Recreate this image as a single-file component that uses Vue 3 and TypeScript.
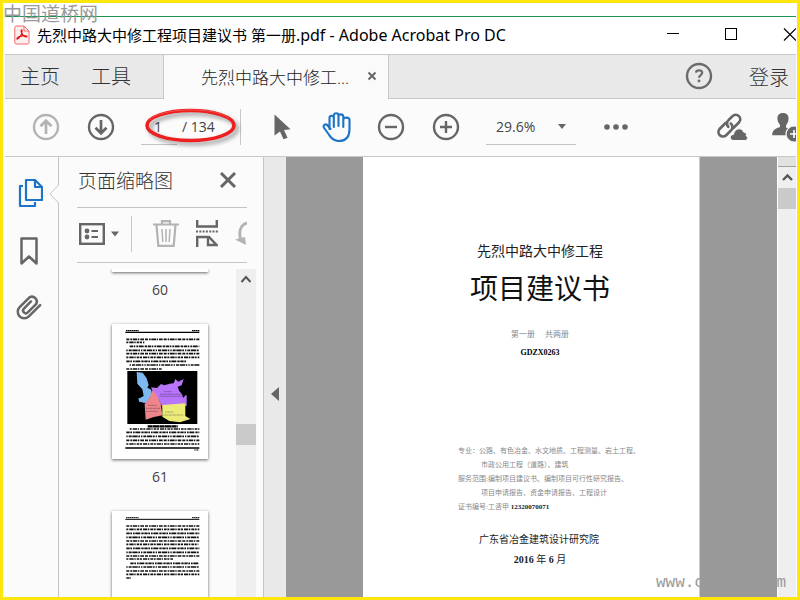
<script setup lang="ts">
import { ref } from 'vue'

interface Row {
  x: number
  y: number
  w: number
  dash: string
}

const pageNumber = ref('1')
const zoom = ref('29.6%')

const patterns = [
  '9 3 5 2 14 2 4 3 11 3',
  '6 3 13 2 4 3 8 2',
  '10 2 5 3 5 2 15 3 7 2',
  '4 3 9 2 16 2 5 3',
]

function makeRows(list: [number, number, number][]): Row[] {
  return list.map(([x, y, w], i) => ({ x, y, w, dash: patterns[i % patterns.length] }))
}

const mapPageRows = makeRows([
  [43, 46, 219], [43, 55, 54], [53, 67, 209], [43, 79, 219], [43, 89, 219],
  [43, 100, 219], [43, 112, 182], [53, 123, 209], [43, 135, 106],
  [53, 315, 209], [43, 325, 219], [43, 337, 219], [43, 349, 219], [43, 360, 219],
])

const textPageRows = makeRows([
  [43, 45, 219], [43, 55, 219], [43, 67, 219], [43, 79, 219], [43, 90, 219],
  [43, 100, 216], [43, 112, 219], [43, 124, 219], [43, 135, 219], [43, 144, 140],
  [55, 157, 207], [43, 168, 219], [43, 180, 219], [43, 190, 219], [43, 201, 14],
])
</script>

<template>
  <div class="frame">
    <div class="top-strip"></div>
    <header class="titlebar">
      <svg class="pdf-icon" width="16" height="20" viewBox="0 0 16 20">
        <path d="M2 1h8l5 5v11.500a1.500 1.500 0 0 1-1.500 1.500h-11.500a1.500 1.500 0 0 1-1.200-1.500v-15A1.500 1.500 0 0 1 2 1z" fill="#fdeeee" stroke="#ef6a6a" />
        <path d="M10 1v5h5" fill="none" stroke="#ef6a6a" />
        <path d="M3 13.500c0-1.500 6-3.500 9.500-2.500 1.500 1-1 1.500-2.500 0C8 9.500 6.500 6 7.300 5c1.200-.8 1 2.500-.3 5-1.200 2.500-4 5.500-4 3.500z" fill="none" stroke="#e01818" stroke-width="1.200" />
      </svg>
      <h1>先烈中路大中修工程项目建议书 第一册<span>.pdf - Adobe Acrobat Pro DC</span></h1>
      <div class="window-buttons">
        <button aria-label="最小化"><svg width="13" height="13"><path d="M0 5.500h12" stroke="#000" /></svg></button>
        <button aria-label="最大化"><svg width="13" height="13"><rect x=".5" y=".5" width="11" height="11" fill="none" stroke="#000" /></svg></button>
        <button aria-label="关闭"><svg width="13" height="13"><path d="M1 .5l12 12M13 .5l-12 12" stroke="#000" stroke-width="1.200" /></svg></button>
      </div>
    </header>

    <nav class="tabs">
      <button class="tab home">主页</button>
      <button class="tab tools">工具</button>
      <div class="tab-active">
        <button class="doc-name">先烈中路大中修工...</button>
        <button class="tab-close" aria-label="关闭标签">
          <svg width="10" height="10"><path d="M1.500 1.500l7 7M8.500 1.500l-7 7" stroke="#666" stroke-width="2" /></svg>
        </button>
      </div>
      <button class="help" aria-label="帮助">
        <svg width="28" height="28" viewBox="0 0 28 28" fill="none" stroke="#6b6b6b">
          <circle cx="14" cy="14" r="12" stroke-width="2.400" />
          <path d="M11 10.600c.3-3 6.200-3 6.200.2 0 2.200-3.200 2.300-3.200 5" stroke-width="2.200" />
          <circle cx="14" cy="19" r="1.400" fill="#6b6b6b" stroke="none" />
        </svg>
      </button>
      <button class="tab login">登录</button>
    </nav>

    <div class="toolbar">
      <button class="round" aria-label="上一页">
        <svg width="28" height="28" viewBox="0 0 28 28" fill="none" stroke="#b3b3b3" stroke-width="2.400">
          <circle cx="14" cy="14" r="12" /><path d="M14 21V8M8.500 13.200L14 7.700l5.500 5.500" stroke-width="2.700" />
        </svg>
      </button>
      <button class="round" aria-label="下一页">
        <svg width="28" height="28" viewBox="0 0 28 28" fill="none" stroke="#666" stroke-width="2.400">
          <circle cx="14" cy="14" r="12" /><path d="M14 7v13M8.500 14.800l5.500 5.500 5.500-5.500" stroke-width="2.700" />
        </svg>
      </button>
      <div class="pager">
        <input v-model="pageNumber" aria-label="页码" />
        <span>/ 134</span>
        <svg class="marker" width="104" height="44" viewBox="0 0 104 44">
          <ellipse cx="50.500" cy="20.500" rx="43.500" ry="15" fill="none" stroke="#ee1f1f" stroke-width="3.600" />
          <path d="M9 15C20 3 74 1 89 13" fill="none" stroke="#f36b6b" stroke-width=".6" />
        </svg>
      </div>
      <div class="divider"></div>
      <button class="arrow" aria-label="选择">
        <svg width="18" height="28" viewBox="0 0 18 28"><path d="M1.500 1.500L17.500 16.300l-6.500.8 3.500 7.700-4 1.500L7 18.500l-5.500 4z" fill="#666" /></svg>
      </button>
      <button class="hand" aria-label="手形工具">
        <svg width="30" height="30" viewBox="0 0 30 30" fill="none" stroke="#1c73c8" stroke-width="2.100" stroke-linecap="round" stroke-linejoin="round">
          <path d="M7.500 17V5.800c0-2.800 4.300-2.800 4.300 0V15M11.800 14V3.400c0-2.900 4.700-2.900 4.700 0V14M16.500 4.500c0-3 4.800-2.700 4.800.3V15M21.300 8c0-3.300 6.200-3 6.200 0v9c0 8-4 12-10.500 12-5.500 0-8-2.500-10.500-7L1.800 15.500c-1-3 2-4 3.700-2.200L8.500 17" />
        </svg>
      </button>
      <button class="round minus" aria-label="缩小">
        <svg width="28" height="28" viewBox="0 0 28 28" fill="none" stroke="#666" stroke-width="2.400"><circle cx="14" cy="14" r="12" /><path d="M8 14h12" /></svg>
      </button>
      <button class="round plus" aria-label="放大">
        <svg width="28" height="28" viewBox="0 0 28 28" fill="none" stroke="#666" stroke-width="2.400"><circle cx="14" cy="14" r="12" /><path d="M8 14h12M14 8v12" /></svg>
      </button>
      <div class="zoom">
        <select v-model="zoom" aria-label="缩放比例"><option>29.6%</option></select>
        <svg width="8" height="5"><path d="M0 0h8l-4 5z" fill="#666" /></svg>
      </div>
      <button class="more" aria-label="更多">
        <svg width="24" height="6" fill="#666"><circle cx="3" cy="3" r="2.800" /><circle cx="12" cy="3" r="2.800" /><circle cx="21" cy="3" r="2.800" /></svg>
      </button>
      <div class="right-tools">
        <button aria-label="共享链接">
          <svg width="32" height="30" viewBox="0 0 32 30" fill="none" stroke="#666" stroke-width="2.700" stroke-linecap="round">
            <g transform="translate(13 14) rotate(-45)">
              <path d="M0-4.500H-8.500a4.500 4.500 0 0 0 0 9H-1a4.500 4.500 0 0 0 4-5" />
              <path d="M2 4.500H9.500a4.500 4.500 0 0 0 0-9H4a4.500 4.500 0 0 0-5 4.500" />
            </g>
            <path d="M17.500 28.500c-4.500 0-4.500-6 0-6 1-6.500 8.500-7.500 10-2.500 2.800.2 3.300 2.500 2.500 3.500 2.500 1.200 1.500 5-.5 5z" fill="#666" stroke="#fbfbfb" stroke-width="1" />
          </svg>
        </button>
        <button aria-label="邀请他人">
          <svg width="25" height="30" viewBox="0 0 25 30">
            <path d="M12 1c4 0 6 2.500 5.500 6.500-.3 3-1.500 4.500-2.500 6v2c3 1.500 8 2 9 6v1.800H1.200c0-6 4-6.800 7.800-8.300v-2c-1-1.500-2.200-3-2.500-5.500C6 3.500 8 1 12 1z" fill="#666" />
            <circle cx="23" cy="22" r="8" fill="#666" stroke="#fafafa" stroke-width="1.200" />
            <path d="M19 22h8M23 18v8" stroke="#fff" stroke-width="1.600" />
          </svg>
        </button>
      </div>
    </div>

    <main class="workspace">
      <aside class="rail">
        <svg class="notch" width="10" height="20"><path d="M10 .5L1 10l9 9.500" fill="#fbfbfb" stroke="#c4c4c4" /></svg>
        <button aria-label="页面缩略图">
          <svg width="26" height="30" viewBox="0 0 26 30" fill="none" stroke="#1c73c8" stroke-width="2.200" stroke-linejoin="round">
            <path d="M6 8H3v20h15v-4" /><path d="M9 2h9l7 7v13H9z" /><path d="M18 2v7h7" />
          </svg>
        </button>
        <button aria-label="书签">
          <svg width="20" height="30" viewBox="0 0 20 30"><path d="M1.500 2.500h15v25l-7.500-7-7.500 7z" fill="none" stroke="#666" stroke-width="2.500" stroke-linejoin="round" /></svg>
        </button>
        <button aria-label="附件">
          <svg width="28" height="28" viewBox="0 0 28 28" fill="none" stroke="#666" stroke-width="2.500" stroke-linecap="round">
            <g transform="translate(12.500 13.500) rotate(-45)">
              <path d="M10 6.500H-6A6.500 6.500 0 0 1-6-6.500H8a5 5 0 0 1 0 9.500H-4a2.500 2.500 0 0 1 0-5.500H6" />
            </g>
          </svg>
        </button>
      </aside>

      <section class="panel">
        <div class="panel-head">
          <h2>页面缩略图</h2>
          <button aria-label="关闭面板"><svg width="18" height="18"><path d="M2 2l14 14M16 2L2 16" stroke="#666" stroke-width="3" /></svg></button>
        </div>
        <div class="panel-tools">
          <button class="options" aria-label="选项">
            <svg width="41" height="22" viewBox="0 0 41 22">
              <rect x="1.200" y="1.200" width="23.600" height="19.600" fill="none" stroke="#666" stroke-width="2.400" />
              <circle cx="8" cy="8" r="2.400" fill="#666" /><circle cx="8" cy="14" r="2.400" fill="#666" />
              <path d="M12.500 8H19M12.500 14H19" stroke="#666" stroke-width="2" /><path d="M32 8.500h8l-4 5z" fill="#666" />
            </svg>
          </button>
          <div class="divider small"></div>
          <button class="trash" aria-label="删除">
            <svg width="26" height="28" viewBox="0 0 26 28" fill="none" stroke="#b3b3b3" stroke-width="2.200">
              <path d="M0 4.500h26M9 4V1.200h8V4M3.500 5l1.800 20.800h15.400L22.500 5" /><path d="M9 9l.8 13M13 9v13M17 9l-.8 13" stroke-width="1.500" />
            </svg>
          </button>
          <button class="split" aria-label="拆分页面">
            <svg width="22" height="28" viewBox="0 0 22 28" fill="none" stroke="#666" stroke-width="2.400">
              <path d="M1.200 0v6.500h19.600V0" /><path d="M0 11.500h22" stroke-dasharray="2 1.300" stroke-width="2" />
              <path d="M1.200 27V17H13l7.500 8H12v-8" />
            </svg>
          </button>
          <button class="rotate" aria-label="旋转">
            <svg width="12" height="26" viewBox="0 0 12 26"><path d="M12 2C6 4 3.500 10 5.500 18" fill="none" stroke="#b3b3b3" stroke-width="3" /><path d="M0 18.500l10-2.500 1 8z" fill="#b3b3b3" /></svg>
          </button>
        </div>
        <div class="thumb-area">
          <div class="thumb-list">
            <div class="sheet tail"></div>
            <span class="num">60</span>
            <div class="sheet">
              <svg viewBox="0 0 288 405" width="96" height="135">
                <path d="M42 20h38M240 20h22" stroke="#000" stroke-width="4" stroke-dasharray="5 1" />
                <path d="M40 25h222" stroke="#000" stroke-width="4" />
                <path v-for="r in mapPageRows" :key="r.y" :d="`M${r.x} ${r.y}h${r.w}`" stroke="#111" stroke-width="5" :stroke-dasharray="r.dash" />
                <rect x="46" y="141" width="210" height="159" fill="#000" />
                <path d="M74 144l18 2 12 17 6 20-4 8 12 6-1 18-14 22-22-4-1-9 15-8-4-20-15-17z" fill="#7db8f0" />
                <path d="M117 190l18 2 12-12 10 4 16-5 12-1 5-13 9 8 16-8-6 19-12 4 5 14 8 8 4 12 6-8 4 0v32h-30l-42 5-10-21-17-23z" fill="#b874fa" />
                <path d="M80 222l20 4-2 12-18-12z" fill="#7db8f0" />
                <path d="M120 198l14 16 12 24 5 36-28 6-22 7-3-46 16-22z" fill="#ee858d" />
                <path d="M151 243l69-5v38l15 9-31 10-32-4-21-13z" fill="#ecea78" />
                <path d="M156 203h24M144 211h70M142 217h72M108 244h26M102 253h42M102 262h36M160 264h24M154 273h60" stroke="#222" stroke-opacity=".6" stroke-width="2" stroke-dasharray="3 1" />
                <path d="M107 307h90" stroke="#000" stroke-width="7" stroke-dasharray="14 1 20 1" />
                <path d="M40 372h222" stroke="#000" stroke-width="5" />
                <path d="M247 378h13" stroke="#000" stroke-width="3" stroke-dasharray="3 1" />
              </svg>
            </div>
            <span class="num">61</span>
            <div class="sheet">
              <svg viewBox="0 0 288 405" width="96" height="135">
                <path d="M42 20h38M240 20h22" stroke="#000" stroke-width="3" stroke-dasharray="5 1" />
                <path d="M40 25h222" stroke="#000" stroke-width="3" />
                <path v-for="r in textPageRows" :key="r.y" :d="`M${r.x} ${r.y}h${r.w}`" stroke="#111" stroke-width="5" :stroke-dasharray="r.dash" />
              </svg>
            </div>
          </div>
          <div class="scroll">
            <svg class="up" width="20" height="20"><path d="M5.500 13l4.500-5 4.500 5" fill="none" stroke="#555" stroke-width="2" /></svg>
            <div class="grip low"></div>
          </div>
        </div>
      </section>

      <button class="splitter" aria-label="折叠面板">
        <svg width="8" height="14"><path d="M8 0v14L0 7z" fill="#666" /></svg>
      </button>

      <section class="viewer">
        <article class="page">
          <p class="project">先烈中路大中修工程</p>
          <p class="headline">项目建议书</p>
          <p class="volume"><span>第一册</span><span>共两册</span></p>
          <p class="code">GDZX0263</p>
          <div class="details">
            <p>专业：公路、有色冶金、水文地质、工程测量、岩土工程、</p>
            <p class="indent">市政公用工程（道路）、建筑</p>
            <p>服务范围:编制项目建议书、编制项目可行性研究报告、</p>
            <p class="indent">项目申请报告、资金申请报告、工程设计</p>
            <p>证书编号:工咨甲 <b>12320070071</b></p>
          </div>
          <p class="institute">广东省冶金建筑设计研究院</p>
          <p class="date"><b>2016</b> 年 <b>6</b> 月</p>
        </article>
      </section>
      <div class="scroll main-scroll">
        <div class="split-box"></div>
        <svg class="up" width="18" height="21"><path d="M5 13l4.500-4.500L14 13" fill="none" stroke="#555" stroke-width="2.400" /></svg>
        <div class="grip"></div>
      </div>
    </main>

    <div class="mark-top">中国道桥网</div>
    <div class="mark-bottom"><span>www.c</span><span>m</span></div>
  </div>
</template>

<style>
body {
  margin: 0;
}
</style>

<style scoped>
* {
  box-sizing: border-box;
}
.frame {
  position: relative;
  display: flex;
  flex-direction: column;
  height: 100vh;
  overflow: hidden;
  border: 3px solid #fde60b;
  padding: 0 1px 0 2px;
  background: #fff;
  color: #444;
  font-family: "Open Sans", "Noto Sans CJK SC", sans-serif;
}
h1, h2, p {
  margin: 0;
  font-weight: 400;
}
button {
  display: flex;
  align-items: center;
  justify-content: center;
  flex: none;
  padding: 0;
  border: 0;
  background: none;
  color: inherit;
  font: inherit;
}
svg {
  display: block;
  flex: none;
}
.top-strip {
  flex: none;
  height: 14px;
  border-bottom: 1px solid #1d9350;
}
.titlebar {
  display: flex;
  flex: none;
  align-items: center;
  height: 38px;
  padding: 0 0 2px 9px;
  border-bottom: 1px solid #c8c8c8;
}
h1 {
  margin-left: 7px;
  color: #000;
  font-family: "Noto Sans", "Noto Sans CJK SC", sans-serif;
  font-size: 15px;
  line-height: 24px;
  white-space: nowrap;
}
h1 span {
  font-size: 16px;
}
.window-buttons {
  display: flex;
  gap: 45px;
  margin-left: auto;
}
.tabs {
  display: flex;
  flex: none;
  height: 44px;
  border-bottom: 1px solid #c8c8c8;
  background: #e9e9e9;
}
.tab {
  padding-bottom: 2px;
  color: #333;
  font-family: "Noto Sans CJK SC", sans-serif;
  font-size: 20px;
  font-weight: 300;
}
.home {
  margin-left: 15px;
}
.tools {
  margin: 0 32px 0 31px;
}
.tab-active {
  display: flex;
  height: 44px;
  width: 226px;
  padding: 0 0 2px 37px;
  border: 1px solid #c8c8c8;
  border-width: 0 1px;
  background: #fafafa;
}
.doc-name {
  color: #222;
  font-family: "Open Sans", "Noto Sans CJK SC", sans-serif;
  font-size: 17px;
  font-weight: 300;
}
.tab-close {
  margin: 0 11px 0 auto;
}
.help {
  margin-left: auto;
  padding-bottom: 2px;
}
.login {
  margin: 0 7px 0 36px;
  padding-bottom: 0;
}
.toolbar {
  display: flex;
  flex: none;
  align-items: center;
  height: 58px;
  padding-bottom: 2px;
  border-bottom: 1px solid #c8c8c8;
  background: #fbfbfb;
  font-size: 15px;
}
.round {
  margin-left: 27px;
}
.pager {
  position: relative;
  display: flex;
  align-items: center;
  height: 36px;
  margin-left: 26px;
  font-size: 14px;
}
.pager input {
  width: 36px;
  height: 36px;
  padding: 0 0 0 13px;
  border: 0;
  border-bottom: 1px solid #c4c4c4;
  background: none;
  color: inherit;
  font: inherit;
}
.pager span {
  width: 59px;
  padding-left: 5px;
}
.marker {
  position: absolute;
  left: -1px;
  top: -4px;
  pointer-events: none;
  filter: drop-shadow(3px 3px 2px #0006);
}
.divider {
  width: 1px;
  height: 36px;
  margin-left: 4px;
  background: #c8c8c8;
}
.arrow {
  margin-left: 32px;
}
.hand {
  margin-left: 31px;
}
.minus {
  margin-left: 25px;
}
.zoom {
  position: relative;
  display: flex;
  align-items: center;
  width: 90px;
  height: 36px;
  margin-left: 26px;
  border-bottom: 1px solid #c4c4c4;
}
.zoom select {
  width: 100%;
  height: 35px;
  padding: 0 0 0 10px;
  border: 0;
  appearance: none;
  background: none;
  color: inherit;
  font: inherit;
  font-size: 14px;
}
.zoom svg {
  position: absolute;
  right: 10px;
  pointer-events: none;
}
.more {
  margin-left: 28px;
}
.right-tools {
  display: flex;
  gap: 23px;
  margin-left: auto;
}
.workspace {
  display: flex;
  flex: 1;
  min-height: 0;
}
.rail {
  position: relative;
  display: flex;
  flex-direction: column;
  align-items: center;
  gap: 28px;
  width: 54px;
  padding: 21px 4px 0 0;
  border-right: 1px solid #c4c4c4;
  background: #fbfbfb;
}
.notch {
  position: absolute;
  right: -1px;
  top: 27px;
}
.panel {
  display: flex;
  flex-direction: column;
  width: 205px;
  padding-left: 18px;
  border-right: 1px solid #c4c4c4;
  background: #fbfbfb;
}
.panel-head {
  display: flex;
  flex: none;
  align-items: center;
  justify-content: space-between;
  height: 51px;
  margin-right: 16px;
  padding: 0 10px 4px 1px;
  border-bottom: 1px solid #c4c4c4;
}
h2 {
  color: #333;
  font-family: "Noto Sans CJK SC", sans-serif;
  font-size: 19px;
  font-weight: 300;
  line-height: 28px;
}
.panel-tools {
  display: flex;
  flex: none;
  align-items: center;
  height: 55px;
  margin-right: 16px;
  padding: 0 0 2px 2px;
  border-bottom: 1px solid #c4c4c4;
}
.panel-tools .small {
  margin-left: 11px;
}
.trash {
  margin-left: 21px;
}
.split {
  margin-left: 17px;
}
.rotate {
  margin-left: auto;
}
.thumb-area {
  display: flex;
  flex: 1;
  min-height: 0;
  margin: 6px 7px 0 0;
}
.thumb-list {
  display: flex;
  flex: 1;
  flex-direction: column;
  align-items: center;
  overflow: hidden;
  padding-left: 7px;
}
.sheet {
  flex: none;
  width: 96px;
  height: 135px;
  background: #fff;
  box-shadow: 0 1px 3px #0009;
}
.tail {
  height: 3px;
}
.num {
  flex: none;
  height: 52px;
  font-size: 14px;
  line-height: 36px;
}
.scroll {
  flex: none;
  width: 20px;
  background: #efefef;
}
.grip {
  height: 21px;
  background: #cacaca;
}
.low {
  margin-top: 135px;
}
.splitter {
  width: 22px;
  padding-top: 34px;
  background: #e9e9e9;
}
.viewer {
  display: flex;
  flex: 1;
  background: #999;
}
.page {
  flex: 1;
  margin: 0 77px;
  padding: 83px 0 0;
  border-right: 1px solid #ccc;
  background: #fff;
  color: #222;
  font-family: "Liberation Serif", "Noto Sans CJK SC", serif;
  text-align: center;
  white-space: nowrap;
}
.project {
  padding-left: 18px;
  font-size: 14px;
  line-height: 24px;
}
.headline {
  margin-top: 6px;
  padding-left: 18px;
  color: #111;
  font-size: 28px;
  line-height: 40px;
}
.volume {
  display: flex;
  justify-content: center;
  gap: 10px;
  margin-top: 16px;
  padding-left: 18px;
  color: #888;
  font-size: 8px;
  line-height: 18px;
}
.code {
  padding-left: 18px;
  color: #000;
  font-size: 8px;
  font-weight: 700;
  line-height: 18px;
}
.details {
  margin-top: 82px;
  padding-left: 95px;
  color: #888;
  font-size: 7px;
  line-height: 14px;
  text-align: left;
}
.indent {
  padding-left: 23px;
}
.details b {
  color: #222;
}
.institute {
  margin-top: 16px;
  padding-left: 16px;
  font-size: 10px;
  line-height: 20px;
}
.date {
  padding-left: 18px;
  font-size: 10px;
  line-height: 20px;
}
.main-scroll {
  width: 19px;
  border-left: 1px solid #fff;
}
.split-box {
  height: 10px;
  border-bottom: 1px solid #a0a0a0;
  background: #e1e1df;
}
.mark-top {
  position: absolute;
  left: 0;
  top: 0;
  color: #9a9a9a;
  font-family: "Noto Sans CJK SC", sans-serif;
  font-size: 19px;
  line-height: 19px;
}
.mark-bottom {
  position: absolute;
  right: 11px;
  bottom: 4px;
  display: flex;
  justify-content: space-between;
  width: 130px;
  color: #999;
  font-family: "Liberation Mono", monospace;
  font-size: 16px;
  line-height: 20px;
}
</style>
